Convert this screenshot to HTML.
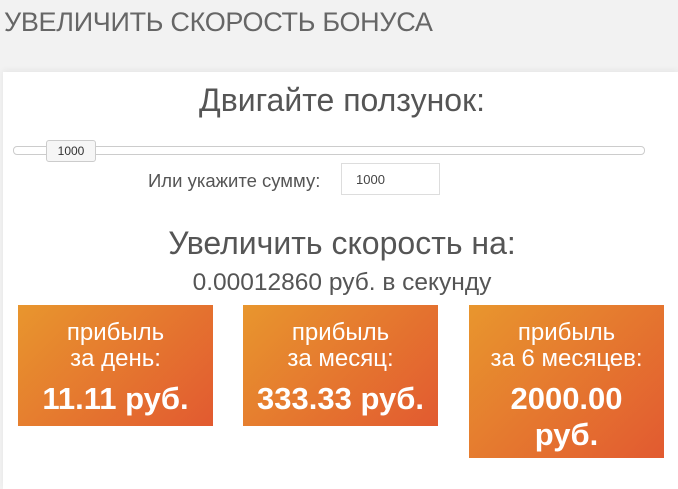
<!DOCTYPE html>
<html><head><meta charset="utf-8"><style>
body{margin:0;width:678px;height:489px;background:#f2f2f2;font-family:"Liberation Sans",sans-serif;position:relative;overflow:hidden;color:#555}
.t{position:absolute;left:4px;top:7px;font-size:27px;color:#666;letter-spacing:-0.3px}
.p{position:absolute;left:3px;top:72px;right:0;bottom:0;background:#fff;box-shadow:0 -2px 6px rgba(0,0,0,.05)}
.a{position:absolute;font-size:32px;color:#555;width:678px;left:3px;text-align:center}
.track{position:absolute;left:13px;top:146px;width:630px;height:7px;border:1px solid #ccc;border-radius:4px;background:#fff}
.h{position:absolute;left:46px;top:140px;width:48px;height:20px;border:1px solid #ccc;border-radius:3px;background:#f6f6f6;font-size:12px;text-align:center;line-height:20px;color:#333}
.lab{position:absolute;left:148px;top:170px;font-size:18.5px;color:#555}
.in{position:absolute;left:341px;top:163px;width:99px;height:32px;border:1px solid #ddd;font-size:13px;line-height:32px;padding-left:14px;box-sizing:border-box;color:#444}
.b{position:absolute;top:305px;width:195px;background:linear-gradient(135deg,#e8962e,#e25a30 100%);color:#fff;text-align:center}
.b .s{font-size:24px;line-height:26px;margin-top:15px}
.b .v{font-size:31px;font-weight:bold;line-height:36px;margin-top:9px}
</style></head><body>
<div class="t">УВЕЛИЧИТЬ СКОРОСТЬ БОНУСА</div>
<div class="p"></div>
<div class="a" style="top:82px">Двигайте ползунок:</div>
<div class="track"></div>
<div class="h">1000</div>
<div class="lab">Или укажите сумму:</div>
<div class="in">1000</div>
<div class="a" style="top:225px">Увеличить скорость на:</div>
<div class="a" style="top:269px;font-size:24.5px">0.00012860 руб. в секунду</div>
<div class="b" style="left:18px;height:121px"><div class="s">прибыль<br>за день:</div><div class="v">11.11 руб.</div></div>
<div class="b" style="left:243px;height:121px"><div class="s">прибыль<br>за месяц:</div><div class="v">333.33 руб.</div></div>
<div class="b" style="left:469px;height:153px"><div class="s">прибыль<br>за 6 месяцев:</div><div class="v">2000.00<br>руб.</div></div>
</body></html>
